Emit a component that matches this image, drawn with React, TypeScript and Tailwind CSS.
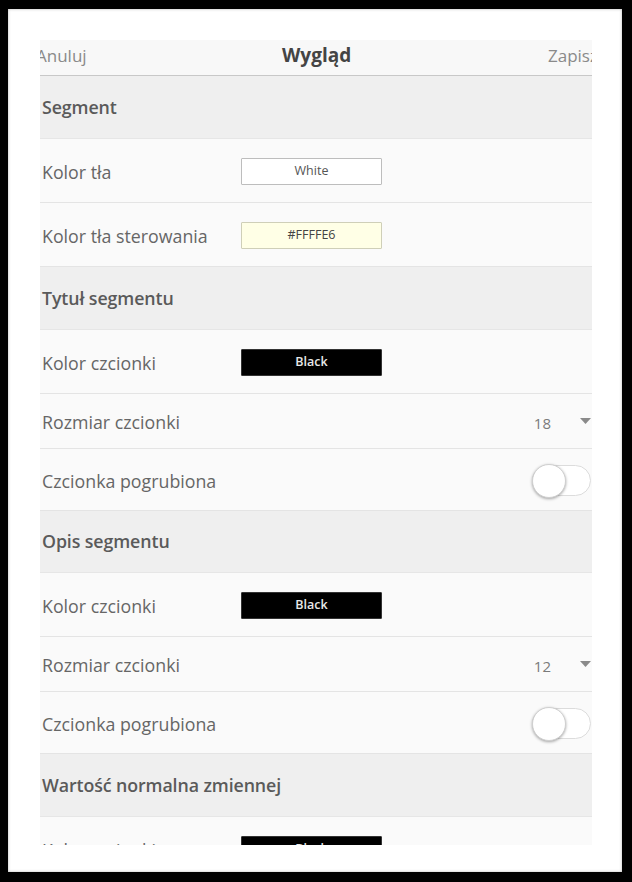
import React from "react";

const font = { fontFamily: '"Open Sans", "Noto Sans", "Liberation Sans", sans-serif' };

function Section({ title, h = "h-[63px]" }: { title: string; h?: string }) {
  return (
    <div className={`${h} shrink-0 bg-[#efefef] border-b border-[#e6e6e6] flex items-center pl-[2px]`}>
      <span className="text-[17.8px] font-semibold text-[#5a5a5a] tracking-[-0.1px]">{title}</span>
    </div>
  );
}

function ColorRow({ label, value, bg, fg, border, weight = "font-medium" }: { label: string; value: string; bg: string; fg: string; border: string; weight?: string }) {
  return (
    <div className="h-[64px] shrink-0 bg-[#fafafa] border-b border-[#e4e4e4] flex items-center pl-[2px]">
      <span className="w-[199px] text-[17.8px] text-[#666666] mt-[3px]">{label}</span>
      <div
        className={`w-[141px] h-[27px] mt-[1px] flex items-center justify-center text-[12.5px] rounded-[1px] border ${weight} ${bg} ${fg} ${border}`}
      >
        {value}
      </div>
    </div>
  );
}

function SizeRow({ value }: { value: string }) {
  return (
    <div className="h-[55px] shrink-0 bg-[#fafafa] border-b border-[#e4e4e4] flex items-center pl-[2px]">
      <span className="flex-1 text-[17.8px] text-[#666666] mt-[3px]">Rozmiar czcionki</span>
      <span className="text-[15px] text-[#7a7a7a] mr-[29px] mt-[5px]">{value}</span>
      <svg width="11" height="6" viewBox="0 0 11 6" className="mr-[1px] mb-[1px]">
        <polygon points="0,0 11,0 5.5,6" fill="#8a8a8a" />
      </svg>
    </div>
  );
}

function BoldRow() {
  return (
    <div className="h-[62px] shrink-0 bg-[#fafafa] border-b border-[#e4e4e4] flex items-center pl-[2px]">
      <span className="flex-1 text-[17.8px] text-[#666666] mt-[3px]">Czcionka pogrubiona</span>
      <div className="relative w-[59px] h-[31px] rounded-full border border-[#dcdcdc] bg-white mr-[1px] mt-[1px]">
        <div className="absolute left-[-1px] top-[-2px] w-[34px] h-[34px] rounded-full bg-white border border-[#d0d0d0] shadow-[0_1px_3px_rgba(0,0,0,0.35)]" />
      </div>
    </div>
  );
}

export default function App() {
  return (
    <div className="w-[632px] h-[882px] bg-black pt-[9px] pl-[8px]" style={font}>
      <div className="w-[614px] h-[863px] bg-white shadow-[inset_0_0_3px_rgba(0,0,0,0.3)] pt-[31px] pl-[32px]">
        <div className="w-[552px] h-[805px] overflow-hidden flex flex-col">
          <div className="h-[36px] shrink-0 bg-[#f8f8f8] border-b border-[#c8c8c8] flex items-center relative">
            <span className="absolute left-[-4px] top-[3px] text-[17px] text-[#8a8a8a]">Anuluj</span>
            <span className="absolute left-[242px] top-[1px] text-[19px] font-bold text-[#444444]">Wygląd</span>
            <span className="absolute left-[508px] top-[3px] text-[17px] text-[#8a8a8a] whitespace-nowrap">Zapisz</span>
          </div>
          <Section title="Segment" />
          <ColorRow label="Kolor tła" value="White" bg="bg-white" fg="text-[#555555]" border="border-[#bdbdbd]" />
          <ColorRow label="Kolor tła sterowania" value="#FFFFE6" bg="bg-[#FFFFE6]" fg="text-[#444444]" border="border-[#cfcfb8]" />
          <Section title="Tytuł segmentu" />
          <ColorRow label="Kolor czcionki" value="Black" bg="bg-black" fg="text-[#e8e8e8]" border="border-[#333333]" weight="font-semibold" />
          <SizeRow value="18" />
          <BoldRow />
          <Section title="Opis segmentu" h="h-[62px]" />
          <ColorRow label="Kolor czcionki" value="Black" bg="bg-black" fg="text-[#e8e8e8]" border="border-[#333333]" weight="font-semibold" />
          <SizeRow value="12" />
          <BoldRow />
          <Section title="Wartość normalna zmiennej" />
          <ColorRow label="Kolor czcionki" value="Black" bg="bg-black" fg="text-[#e8e8e8]" border="border-[#333333]" weight="font-semibold" />
        </div>
      </div>
    </div>
  );
}
